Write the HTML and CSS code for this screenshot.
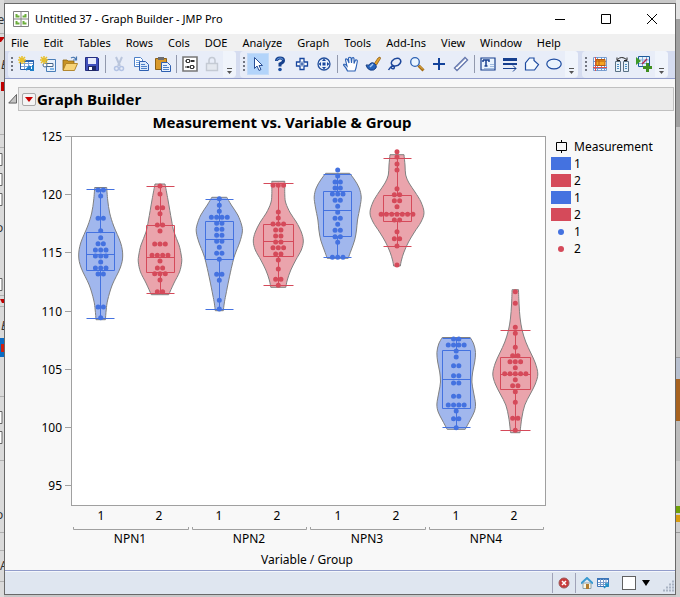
FILE: index.html
```html
<!DOCTYPE html>
<html lang="en">
<head>
<meta charset="utf-8">
<title>Untitled 37 - Graph Builder - JMP Pro</title>
<link rel="stylesheet" href="styles.css">
</head>
<body>
<div class="desktop">
  <svg class="strip strip-left" aria-hidden="true">
    <g class="behind-lines">
      <path d="M0 33.500h5M0 134.500h5M0 147.500h5M0 295.500h5M0 306.500h5M0 396.500h5M0 460.500h5M0 532.500h5M0 550.500h5M0 581.500h5"/>
      <path class="behind-field" d="M-5 153.500h7v12h-7zM-5 173.500h7v12h-7zM-5 193.500h7v12h-7zM-5 278.500h7v12h-7zM-5 411.500h7v12h-7zM-5 431.500h7v12h-7z"/>
    </g>
    <path fill="#c00000" d="M0 37h5l-4 5h-1zM0 299h5v4h-3zM1 82h4v9h-4z"/>
    <path fill="#0a6cc4" d="M0 338h5v19h-5z"/>
    <path fill="#d02010" d="M1 344h4v8h-4z"/>
    <g class="behind-text">
      <text x="-9" y="24">Se</text>
      <text x="1" y="69" font-style="italic">E</text>
      <text x="-4" y="232">o</text>
      <text x="1" y="330" font-style="italic">E</text>
      <text x="-4" y="519">o</text>
      <text x="0" y="570">A</text>
    </g>
  </svg>

  <div class="window">
    <header class="titlebar">
      <svg class="app-icon" viewBox="0 0 16 16" aria-hidden="true">
        <path d="M.5.5h15v15h-15zM8 1v14M1 8h14" fill="#fff" stroke="#808080"/>
        <path d="M2.500 3v3.500h4v-2h-2V3zM13.500 3v3.500h-4v-2h2V3zM2.500 10v3.500h4v-2h-2V10zM9.500 10v3.500h4v-2h-2V10z" fill="#6cae3c"/>
      </svg>
      <h1 class="title">Untitled 37 - Graph Builder - JMP Pro</h1>
      <div class="window-buttons">
        <button type="button" aria-label="Minimize"><svg viewBox="0 0 10 10"><path d="M0 5.500h10"/></svg></button>
        <button type="button" aria-label="Maximize"><svg viewBox="0 0 10 10"><path d="M.5.5h9v9h-9z"/></svg></button>
        <button type="button" aria-label="Close"><svg viewBox="0 0 10 10"><path d="M0 0l10 10M10 0L0 10"/></svg></button>
      </div>
    </header>

    <nav class="menubar">
      <button type="button">File</button><button type="button">Edit</button><button type="button">Tables</button><button type="button">Rows</button><button type="button">Cols</button><button type="button">DOE</button><button type="button">Analyze</button><button type="button">Graph</button><button type="button">Tools</button><button type="button">Add-Ins</button><button type="button">View</button><button type="button">Window</button><button type="button">Help</button>
    </nav>

    <div class="toolbar">
      <div class="tool-group">
        <span class="grip"></span>
        <button type="button" aria-label="New data table"><svg viewBox="0 0 16 16"><path d="M2.500 4.500h13v9h-13z" fill="#fff" stroke="#2a5fa8"/><path d="M3 7.500h12M3 10.500h12M6.500 5v8M10.500 5v8" stroke="#7aa3d8"/><path d="M3 4h12.500v2H3z" fill="#2a64b0"/><path d="M8 14l4-4M12 10v3M15 9v5h-3" stroke="#1f7fc8" stroke-width="2" fill="none"/><path d="M4 0v8M0 4h8M1 1l6 6M7 1L1 7" stroke="#e8c02c" stroke-width="1.500"/></svg></button>
        <button type="button" aria-label="New script"><svg viewBox="0 0 16 16"><path d="M6.500 3.500h9v12h-9z" fill="#e8f1fb" stroke="#4a7eb8"/><path d="M5 7.500h8v3H5z" fill="#fff" stroke="#47678d"/><circle cx="5" cy="9" r="2" fill="#fff" stroke="#47678d"/><path d="M10 12h4v2h-4z" fill="#7fb5e6"/><path d="M4 0v8M0 4h8M1 1l6 6M7 1L1 7" stroke="#e8c02c" stroke-width="1.500"/></svg></button>
        <button type="button" aria-label="Open"><svg viewBox="0 0 16 16"><path d="M1 14V4h4l1 1h6v3h3l-3 6z" fill="#c79222" stroke="#8c6410" stroke-width=".8"/><path d="M1 14.500l3-7h11.500l-3 7z" fill="#f8d477" stroke="#a87a1c" stroke-width=".8"/><path d="M9 2q3-2 5 1.500M14.500.5V4H11" fill="none" stroke="#4776b0" stroke-width="1.200"/></svg></button>
        <button type="button" aria-label="Save"><svg viewBox="0 0 16 16"><path d="M1.500 1.500h12l1 1v12h-13z" fill="#4050bc" stroke="#252f80"/><path d="M4 2h8v6H4z" fill="#e8ebfa"/><path d="M4 10h8v5H4z" fill="#1f2866"/><path d="M5 11h3v3H5z" fill="#fff"/></svg></button>
        <span class="divider"></span>
        <button type="button" disabled aria-label="Cut"><svg viewBox="0 0 16 16"><path d="M5 1l4 9M11 1L7 10" stroke="#b9c5dc" stroke-width="2"/><circle cx="5.500" cy="12.500" r="2" fill="none" stroke="#b3c3e4" stroke-width="1.500"/><circle cx="10.500" cy="12.500" r="2" fill="none" stroke="#b3c3e4" stroke-width="1.500"/></svg></button>
        <button type="button" aria-label="Copy"><svg viewBox="0 0 16 16"><path d="M1.500 1.500h6l2 2v7h-8z" fill="#fff" stroke="#4d80c8"/><path d="M3 4.500h4M3 6.500h3M3 8.500h3" stroke="#7aa6de"/><path d="M6.500 5.500h6l3 3v6h-9z" fill="#dbe9fa" stroke="#2e5fb0"/><path d="M8 8.500h4M8 10.500h6M8 12.500h6" stroke="#4d80c8"/></svg></button>
        <button type="button" aria-label="Paste"><svg viewBox="0 0 16 16"><path d="M.5 2.500h11v11H.5z" fill="#d99a2c" stroke="#8c6017"/><path d="M3 1h6v3H3z" fill="#6d6d70"/><path d="M6.500 6.500h6l3 3v6h-9z" fill="#e8f1fc" stroke="#2e5fb0"/><path d="M8 9.500h4M8 11.500h6M8 13.500h6" stroke="#4d80c8"/></svg></button>
        <span class="divider"></span>
        <button type="button" aria-label="Journal"><svg viewBox="0 0 16 16"><path d="M1 1h14v14H1z" fill="#fff" stroke="#777" stroke-width="1.600"/><path d="M3 5h10M3 11h10" stroke="#333"/><path d="M4.500 3.500h3v3h-3zM8.500 9.500h3v3h-3z" fill="#fff" stroke="#333"/><path d="M9 5h3M5 11h2" stroke="#333" stroke-width="2"/></svg></button>
        <button type="button" disabled aria-label="Lock"><svg viewBox="0 0 16 16"><path d="M2.500 7.500h11v7h-11z" fill="#e4e8ef" stroke="#c4cad4" stroke-width="1.400"/><path d="M5 7V4.500a3 3 0 0 1 6 0V7" fill="none" stroke="#c4cad4" stroke-width="1.600"/></svg></button>
        <button type="button" class="more" aria-label="More file tools"><svg viewBox="0 0 5 6"><path d="M0 .5h5" stroke="#555"/><path d="M0 3h5L2.500 6z" fill="#555"/></svg></button>
      </div>

      <div class="tool-group">
        <span class="grip"></span>
        <button type="button" class="active" aria-label="Arrow" aria-pressed="true"><svg viewBox="0 0 16 16"><path d="M4.500 1.500v11l2.500-2.500 2 4.500 2-1-2-4h3.500z" fill="#fff" stroke="#2a4f95"/></svg></button>
        <button type="button" aria-label="Help"><svg viewBox="0 0 16 16"><path d="M4.500 5Q4.500 2 8 2t3.500 2.500Q11.500 6.500 8 8v2.500" fill="none" stroke="#16408c" stroke-width="3"/><path d="M4.800 4.500Q5 2 8 2t3 2" fill="none" stroke="#5f94dc"/><circle cx="8" cy="13.500" r="1.800" fill="#1d4fa3"/></svg></button>
        <button type="button" aria-label="Selection"><svg viewBox="0 0 16 16"><path d="M6 2.500h4V6h3.500v4H10v3.500H6V10H2.500V6H6z" fill="#fff" stroke="#17469e" stroke-width="1.300"/><path d="M8 5.500v5M5.500 8h5" stroke="#17469e"/></svg></button>
        <button type="button" aria-label="Scroller"><svg viewBox="0 0 16 16"><circle cx="8" cy="8" r="6" fill="#e9f1fc" stroke="#234f9c" stroke-width="1.300"/><path d="M8 2.500l2 2.500H6zM8 13.500l2-2.500H6zM2.500 8L5 6v4zM13.500 8L11 6v4zM6.500 6.500h3v3h-3z" fill="#17469e"/></svg></button>
        <span class="divider"></span>
        <button type="button" aria-label="Grabber"><svg viewBox="0 0 16 16"><path d="M4.500 15q-1-3-4-6 .5-2 3.500 1L2.500 4q0-2 2-.5L6 7l-.5-5Q7 .5 8 2l.5 5 .5-5q1.500-1 2 .5V7.500L12.500 4q2-.5 1.800 1.500L13 12l-1 3z" fill="#fff" stroke="#2c61b4" stroke-width="1.100"/></svg></button>
        <button type="button" aria-label="Brush"><svg viewBox="0 0 16 16"><path d="M9 8l4-6 2-1 .5 1.500-4 6.500z" fill="#e5a52e" stroke="#8d5c12" stroke-width=".8"/><path d="M1 9q3 1 5-2 2-1 4 1t1 4q-2 3-6 2-3-1-4-5z" fill="#2864ba" stroke="#173f85"/><path d="M5 11l3-3" stroke="#a7cbf5" stroke-width="1.500"/></svg></button>
        <button type="button" aria-label="Lasso"><svg viewBox="0 0 16 16"><path d="M7 10q-4-1.500-2-5 3-3.500 7-2.500 3 2 1 5-2 3-6 2.500-3-.5-3 1.500 1 2 3 1 1-2-1-2.500-3 1-4.500 4" fill="none" stroke="#1c469a" stroke-width="1.500"/></svg></button>
        <button type="button" aria-label="Magnifier"><svg viewBox="0 0 16 16"><path d="M9.500 9.500l5 5" stroke="#a36b14" stroke-width="3"/><path d="M10 9.500l4 4" stroke="#efbd52"/><circle cx="6" cy="6" r="4.300" fill="#eaf5ff" stroke="#2e62b3" stroke-width="1.300"/></svg></button>
        <button type="button" aria-label="Crosshairs"><svg viewBox="0 0 16 16"><path d="M8 2v12M2 8h12" stroke="#12429b" stroke-width="2"/></svg></button>
        <button type="button" aria-label="Ruler"><svg viewBox="0 0 16 16"><path d="M1.500 12L12 1.500l2.500 2.500L4 14.500z" fill="#fff" stroke="#6577ad" stroke-width="1.400"/><path d="M4 11l8-8" stroke="#b2bedb"/></svg></button>
        <span class="divider"></span>
        <button type="button" aria-label="Annotate"><svg viewBox="0 0 16 16"><path d="M1 2h14v12H1z" fill="#e9f3fd" stroke="#173f8e" stroke-width="1.200"/><path d="M3 4h6v2M3 6V4M6 4v6M4.500 10h3" fill="none" stroke="#173f8e" stroke-width="1.500"/><path d="M10 8.500h4M10 10.500h4M4 12.500h10" stroke="#a0bbe0"/></svg></button>
        <button type="button" aria-label="Line"><svg viewBox="0 0 16 16"><path d="M1 3.500h14" stroke="#173f8e" stroke-width="3"/><path d="M1 8h14" stroke="#173f8e" stroke-width="2"/><path d="M1 12.500h13M11 9.500l3 3-3 3" fill="none" stroke="#173f8e"/></svg></button>
        <button type="button" aria-label="Polygon"><svg viewBox="0 0 16 16"><path d="M1.500 14V7l4-5H10v2.500l4.500 4-4 5.500z" fill="#f3f8fe" stroke="#1d4ba0" stroke-width="1.200"/></svg></button>
        <button type="button" aria-label="Oval"><svg viewBox="0 0 16 16"><ellipse cx="8" cy="8" rx="7.200" ry="4.800" fill="#e9f3fd" stroke="#1d4ba0" stroke-width="1.200"/></svg></button>
        <button type="button" class="more" aria-label="More tools"><svg viewBox="0 0 5 6"><path d="M0 .5h5" stroke="#555"/><path d="M0 3h5L2.500 6z" fill="#555"/></svg></button>
      </div>

      <div class="tool-group">
        <span class="grip"></span>
        <button type="button" aria-label="Data view"><svg viewBox="0 0 16 16"><path d="M1.500 1.500h13v13h-13z" fill="#fff" stroke="#7b9fd0"/><path d="M1 5.500h14M1 9.500h14M1 12.500h14M5.500 1v14M9.500 1v14M12.500 1v14" stroke="#7098d0"/><path d="M3.500 1v14M1 11.500h14" stroke="#e05050"/><path d="M4 3.500h9v6H4z" fill="#f5a623" stroke="#b65a10"/><path d="M4 5h8M7 4v5" stroke="#b65a10"/></svg></button>
        <button type="button" aria-label="Compare tables"><svg viewBox="0 0 16 16"><path d="M1.500 5.500h5v10h-5zM9.500 5.500h5v10h-5z" fill="#e7f2fa" stroke="#5a7184"/><path d="M3 8.500h2M3 10.500h2M3 12.500h2M11 8.500h2M11 10.500h2M11 12.500h2" stroke="#4b8fc6" stroke-width="1.200"/><path d="M3.500 3.500q4-4 9 0M3 1.500v3h3M13 1.500v3h-3" fill="none" stroke="#222"/></svg></button>
        <button type="button" aria-label="Add graph"><svg viewBox="0 0 16 16"><path d="M2.500 .5h11v10h-11z" fill="#e7f2fc" stroke="#1d5a9c"/><path d="M3 4h10M3 7.500h10M6.500 1v9M10.500 1v9" stroke="#8ab2dc"/><path d="M6 8l5-5" stroke="#b42a4c" stroke-width="1.500"/><path d="M0 1v8l5-4z" fill="#3e9a2a"/><path d="M11.500 7v9M7 11.500h9" stroke="#3f8f20" stroke-width="3"/></svg></button>
        <button type="button" class="more" aria-label="More graph tools"><svg viewBox="0 0 5 6"><path d="M0 .5h5" stroke="#555"/><path d="M0 3h5L2.500 6z" fill="#555"/></svg></button>
      </div>
    </div>

    <main class="report">
      <div class="outline">
        <svg class="disclosure" viewBox="0 0 10 10" aria-hidden="true"><path d="M9.500 0v9.500H.8z" fill="#c4c4c4" stroke="#555"/></svg>
        <div class="outline-bar">
          <button type="button" class="red-triangle" aria-label="Graph Builder options"><svg viewBox="0 0 8 5"><path d="M0 0h8L4 5z" fill="#c80000"/></svg></button>
          <h2>Graph Builder</h2>
        </div>
      </div>

      <section class="graph">
        <div class="plot">
          <h3>Measurement vs. Variable &amp; Group</h3>
          <svg id="chart" viewBox="18 133 528 436" role="img" aria-label="Measurement vs. Variable &amp; Group">
            <rect x="71.500" y="136.500" width="474" height="369" fill="#fff" stroke="#a0a0a0"/>
            <path class="axis" d="M65 136.500h6M65 194.500h6M65 252.500h6M65 311.500h6M65 369.500h6M65 427.500h6M65 485.500h6"/>
            <g class="label end">
              <text x="62" y="141">125</text><text x="62" y="199">120</text><text x="62" y="257">115</text><text x="62" y="316">110</text><text x="62" y="374">105</text><text x="62" y="432">100</text><text x="62" y="490">95</text>
            </g>
            <g id="violins"></g>
            <g class="label mid">
              <text x="101" y="520">1</text><text x="159" y="520">2</text><text x="219" y="520">1</text><text x="277" y="520">2</text><text x="338" y="520">1</text><text x="396" y="520">2</text><text x="456" y="520">1</text><text x="514" y="520">2</text>
              <text x="130" y="543">NPN1</text><text x="249" y="543">NPN2</text><text x="367" y="543">NPN3</text><text x="486" y="543">NPN4</text>
              <text x="307" y="564">Variable / Group</text>
            </g>
            <path class="axis" d="M73.500 527v2.500h115V527M192.500 527v2.500h114V527M310.500 527v2.500h115V527M429.500 527v2.500h114V527"/>
          </svg>
        </div>
        <ul class="legend">
          <li><svg viewBox="0 0 20 13"><path d="M5.500 2.500h10v8h-10zM10.500 0v2.500M10.500 10.500V13" fill="none" stroke="#000"/></svg>Measurement</li>
          <li><span class="swatch blue"></span>1</li>
          <li><span class="swatch red"></span>2</li>
          <li><span class="swatch blue"></span>1</li>
          <li><span class="swatch red"></span>2</li>
          <li><span class="dot blue"></span>1</li>
          <li><span class="dot red"></span>2</li>
        </ul>
      </section>
    </main>

    <footer class="statusbar">
      <button type="button" class="cell" aria-label="Errors"><svg viewBox="0 0 12 12"><circle cx="6" cy="6" r="5" fill="#c93a3a" stroke="#9c5b5b"/><path d="M4 4l4 4M8 4L4 8" stroke="#fff" stroke-width="1.500"/></svg></button>
      <div class="cell">
        <button type="button" aria-label="Home window"><svg viewBox="0 0 12 12"><path d="M2 6h8v5.500H2z" fill="#fdf6e0" stroke="#8ba0ac"/><path d="M5 7h3v5H5z" fill="#b27c2c"/><path d="M0 6.500L6 1l6 5.500" fill="none" stroke="#3a9ad0" stroke-width="2"/></svg></button>
        <button type="button" aria-label="Data table"><svg viewBox="0 0 12 12"><path d="M.5 1.500h11v8H.5z" fill="#fff" stroke="#3b75b8"/><path d="M0 2h12" stroke="#3b75b8" stroke-width="2"/><path d="M1 5.500h10M1 7.500h10M3.500 2v7M6.500 2v7M9 2v7" stroke="#7a9ccc"/><path d="M7 11l4-4M8 7h3v3" fill="none" stroke="#2393c8" stroke-width="1.500"/></svg></button>
      </div>
      <input type="checkbox" aria-label="Select window">
      <button type="button" class="drop" aria-label="Window list"><svg viewBox="0 0 8 6"><path d="M0 0h8L4 6z" fill="#000"/></svg></button>
      <svg class="resize" viewBox="0 0 12 12" aria-hidden="true"><path d="M1 10.500h2M4 10.500h2M7 10.500h2M10 10.500h2M4 7.500h2M7 7.500h2M10 7.500h2M7 4.500h2M10 4.500h2M10 1.500h2" stroke="#aab4c4" stroke-width="2"/></svg>
    </footer>
  </div>

  <svg class="strip" aria-hidden="true">
    <path fill="#e2e2e2" d="M0 0h5v19H0z"/><path fill="#a0a0a0" d="M0 19h5v108H0z"/><path fill="#c6c6c6" d="M0 127h5v230H0z"/>
    <path fill="#b8c0cf" d="M0 357h5v22H0z"/><path fill="#a7621f" d="M0 379h5v42H0z"/><path fill="#bcbcbc" d="M0 421h5v40H0z"/>
    <path fill="#cfcfcf" d="M0 461h5v136H0z"/><path fill="#6fa008" d="M0 506h5v7H0z"/><path fill="#d89c10" d="M0 515h5v7H0z"/><path fill="#999" d="M0 357h5v1H0zM0 532h5v1H0z"/>
  </svg>
</div>
<script src="chart.js"></script>
</body>
</html>
```
FILE: styles.css
```css
* { box-sizing: border-box; }

body {
  margin: 0;
  background: #c8c8c8;
  color: #000;
  font: 12px/16px "Noto Sans", "Open Sans", sans-serif;
}

button {
  display: flex;
  align-items: center;
  justify-content: center;
  padding: 0;
  border: 0;
  background: none;
  color: inherit;
  font: inherit;
}

button svg { fill: none; }

h1, h2, h3, ul { margin: 0; padding: 0; }

.desktop {
  display: grid;
  grid-template-columns: 4px 1fr 4px;
  min-height: 100vh;
  background: #c8c8c8;
}

.strip { width: 4px; height: 100%; overflow: hidden; }
.strip-left { background: #dadada; }
.behind-lines { stroke: #b0b0b0; }
.behind-field { fill: #fff; stroke: #666; }
.behind-text { font-size: 12px; fill: #333; }

.window {
  display: flex;
  flex-direction: column;
  margin: 3px 0 2px;
  border: 1px solid #696969;
  background: #f8f8f8;
}

.titlebar {
  display: flex;
  align-items: center;
  height: 30px;
  padding-left: 8px;
  background: #fff;
}
.app-icon { width: 16px; height: 16px; margin-right: 6px; }
.title { flex: 1; font-size: 11px; font-weight: 400; }
.window-buttons { display: flex; }
.window-buttons button { width: 46px; height: 30px; }
.window-buttons svg { width: 10px; height: 10px; overflow: visible; stroke: #000; }

.menubar { display: flex; gap: 15px; height: 17px; padding-left: 6px; background: #f0f0f0; font-size: 11px; }

.toolbar {
  display: flex;
  gap: 4px;
  padding: 0 3px;
  background: #d5dcf0;
  border-bottom: 1px solid #929dcb;
}
.tool-group {
  display: flex;
  align-items: center;
  height: 27px;
  padding-bottom: 1px;
  border-radius: 4px;
  background: #e8edf8;
}
.tool-group button { width: 22px; height: 22px; }
.tool-group button svg { width: 16px; height: 16px; }
.tool-group .active { background: #b3d4fa; box-shadow: inset 0 0 0 1px #c4dcf8; }
.tool-group .more { width: 13px; height: 26px; align-items: flex-end; padding-bottom: 3px; background: #f0f4fb; border-radius: 0 4px 4px 0; }
.tool-group .more svg { width: 5px; height: 6px; }
.grip { width: 7px; height: 14px; background: repeating-linear-gradient(#737783 0 2px, transparent 2px 4px) 3px 0 / 2px 14px no-repeat; }
.divider { width: 1px; height: 18px; margin: 0 2px; background: #9299ad; }

.report { flex: 1; }
.outline { display: flex; align-items: center; gap: 1px; padding: 8px 1px 0 3px; }
.disclosure { width: 9px; height: 10px; }
.outline-bar {
  flex: 1;
  display: flex;
  align-items: center;
  height: 24px;
  padding-left: 3px;
  gap: 1px;
  border: 1px solid #c0c0c0;
  background: #ebebeb;
}
.outline-bar h2 { font-size: 15px; line-height: 20px; font-family: "Open Sans", sans-serif; }
.red-triangle { width: 14px; height: 13px; border: 1px solid #a8a8a8; border-radius: 2px; background: #f4f4f4; }
.red-triangle svg { width: 8px; height: 5px; }

.graph { display: grid; grid-template-columns: 1fr 124px; gap: 5px; padding: 2px 0 0 13px; }
.plot h3 { padding-bottom: 2px; font-size: 15px; line-height: 18px; text-align: center; }
.plot svg { display: block; width: 100%; overflow: visible; }
.axis { fill: none; stroke: #a0a0a0; }
.label { font-size: 12px; }
.end { text-anchor: end; }
.mid { text-anchor: middle; }

.legend { list-style: none; padding-top: 25px; }
.legend li { display: flex; align-items: center; gap: 3px; height: 17px; }
.legend svg, .swatch { width: 20px; height: 13px; }
.dot { width: 6px; height: 6px; margin: 0 7px; border-radius: 50%; }
.blue { background: #4472e0; }
.red { background: #d54a5a; }

.statusbar {
  display: flex;
  align-items: center;
  justify-content: flex-end;
  height: 24px;
  border-top: 1px solid #929dcb;
  background: #dfe6f0;
  box-shadow: inset 0 1px #f4f7fb;
}
.statusbar .cell { display: flex; align-items: center; gap: 4px; height: 20px; padding: 0 5px; border-left: 1px solid #a0a3b8; }
.statusbar svg { width: 12px; height: 12px; }
.statusbar input { appearance: none; width: 14px; height: 14px; margin: 0 6px 0 8px; border: 1px solid #606060; background: #fff; }
.statusbar .drop svg { width: 8px; height: 6px; }
.statusbar .resize { margin: 7px 1px 0 12px; }

.violin-blue { fill: #a1b7ed; }
.violin-red { fill: #eaa4ac; }
.outline-path { stroke: #808080; stroke-width: 1; }
.ink-blue { stroke: #4472e0; fill: none; }
.ink-red { stroke: #d54a5a; fill: none; }
.dots { stroke-width: 5px; stroke-linecap: round; }
```
FILE: chart.js
```js
// Each violin: centre, profile [y, half-width], box half-width,
// stats [upper whisker, q3, median, q1, lower whisker], dot rows [y, count].
const violins = [
  { x: 100.7, box: 14, stats: [189.5, 232.5, 254.5, 270.5, 318.5],
    profile: [[187.5,6],[200,7],[213,9],[226,13],[243,20],[256,22],[268,19.5],[285,11.5],[300,7],[310,5.5],[319.7,4.7]],
    dots: [[190,2],[196,1],[218.3,2],[230.7,1],[237.7,1],[243.7,2],[250,3],[256,3],[262,1],[268,3],[274,2],[307,2],[317.7,1]] },
  { x: 160, box: 14, stats: [186.5, 225.5, 257.5, 272.5, 293.5],
    profile: [[184,5],[200,8],[220,11.5],[232,14],[245,19],[255,21.2],[262,21.7],[272,19.5],[283,14],[294.7,8.7]],
    dots: [[186,1],[194,1],[207.7,2],[213.7,1],[225,2],[231,1],[244,3],[255.3,4],[261,1],[268,2],[273.7,3],[280,1],[291.7,2]] },
  { x: 219.3, box: 14, stats: [199.5, 221.5, 239.5, 259.5, 309.5],
    profile: [[197.3,7.5],[205,12],[215,18.5],[225,22.3],[232,23],[242,20.5],[255,15.5],[265,12.8],[280,9.5],[295,6.5],[303,5],[310.7,4]],
    dots: [[198.7,1],[205.3,1],[211.3,1],[217.3,4],[223.3,2],[229.3,2],[235.3,2],[241.3,2],[247.3,1],[253.3,2],[259.3,1],[274.3,2],[280.3,1],[300.3,1],[309,1]] },
  { x: 278.3, box: 15, stats: [183.5, 224.5, 241.5, 256.5, 285.5],
    profile: [[181.3,6.5],[195,6.5],[203,7.5],[213,12],[222,18],[232,23],[241,25],[250,23],[260,17.5],[270,12.5],[280,9],[287.3,7.5]],
    dots: [[185.3,3],[212,1],[218,1],[224,3],[230,2],[236,2],[242,2],[247.7,3],[254,2],[260,1],[269,1],[279.3,2],[285.3,1]] },
  { x: 337.7, box: 14, stats: [174.5, 191.5, 210.5, 236.5, 257.5],
    profile: [[173.3,12],[180,17],[188,21.5],[197,23.5],[207,22.3],[220,19.8],[230,18.8],[240,17],[250,13.5],[258.3,10.5]],
    dots: [[170,1],[176,1],[182,2],[188,2],[194,3],[200.3,2],[206.3,1],[212.3,1],[218.3,2],[224.3,1],[230.3,2],[236.7,2],[242.3,1],[257.3,3]] },
  { x: 397, box: 14, stats: [158.5, 195.5, 213.5, 221.5, 246.5],
    profile: [[154.7,7],[165,8],[175,8.7],[183,12],[192,18],[202,24],[212.7,27],[222,24],[232,17.5],[242,11.5],[252,7],[260,4.5],[266,3.3]],
    dots: [[151.7,1],[157,1],[164,1],[170,1],[188.7,1],[194.7,2],[200.7,2],[206.7,1],[214.3,7],[220,2],[231.7,1],[238.7,2],[246,1],[265,1]] },
  { x: 456.2, box: 14, stats: [338.5, 350.5, 379.5, 408.5, 427.5],
    profile: [[337.5,14],[344,17.5],[352.5,19.3],[362,18.5],[372,16.5],[382,15.7],[392,17.3],[404,19.3],[412,18],[420,14],[429.3,9]],
    dots: [[339,2],[345,4],[351,1],[357,1],[365.7,2],[375.7,2],[383,2],[396.3,2],[405,4],[411,1],[418.7,2],[427.7,1]] },
  { x: 515.3, box: 15, stats: [330.5, 357.5, 374.5, 389.5, 430.5],
    profile: [[289.7,3.2],[305,3.8],[318,4.8],[330,6.8],[342,10.5],[353,15.5],[363,20],[374,22.5],[384,20],[394,15],[405,9.5],[418,6.5],[432.7,4.7]],
    dots: [[291.7,1],[303.3,1],[327.3,1],[333.3,1],[347.3,1],[355.7,2],[361.7,3],[367.7,1],[373.7,5],[379.7,1],[385.7,2],[391.7,1],[402.3,1],[418.3,2],[430.3,1]] }
];

const DOT_PITCH = 5.3;

// Catmull-Rom spline through the points, as cubic segments.
function curve(points) {
  let d = "";
  for (let i = 0; i < points.length - 1; i++) {
    const p0 = points[i - 1] || points[i];
    const p1 = points[i];
    const p2 = points[i + 1];
    const p3 = points[i + 2] || p2;
    d += `C${p1[0] + (p2[0] - p0[0]) / 6} ${p1[1] + (p2[1] - p0[1]) / 6} ` +
         `${p2[0] - (p3[0] - p1[0]) / 6} ${p2[1] - (p3[1] - p1[1]) / 6} ${p2[0]} ${p2[1]}`;
  }
  return d;
}

function draw(v, index) {
  const tone = index % 2 ? "red" : "blue";
  const right = v.profile.map(([y, w]) => [v.x + w, y]);
  const left = v.profile.map(([y, w]) => [v.x - w, y]).reverse();
  const body = `M${right[0]}${curve(right)}L${left[0]}${curve(left)}Z`;

  const [top, q3, median, q1, low] = v.stats;
  const c = Math.floor(v.x) + 0.5;
  const l = c - v.box;
  const w = v.box * 2;
  const box = `M${l} ${top}h${w}M${l} ${low}h${w}M${l} ${median}h${w}` +
              `M${l} ${q3}h${w}V${q1}h${-w}zM${c} ${top}V${q3}M${c} ${q1}V${low}`;

  const dots = v.dots.map(([y, n]) =>
    Array.from({ length: n }, (_, i) => `M${v.x + (i - (n - 1) / 2) * DOT_PITCH} ${y}h0`).join("")
  ).join("");

  return `<path class="violin-${tone} outline-path" d="${body}"/>` +
         `<path class="ink-${tone}" d="${box}"/>` +
         `<path class="ink-${tone} dots" d="${dots}"/>`;
}

document.getElementById("violins").innerHTML = violins.map(draw).join("");
```
